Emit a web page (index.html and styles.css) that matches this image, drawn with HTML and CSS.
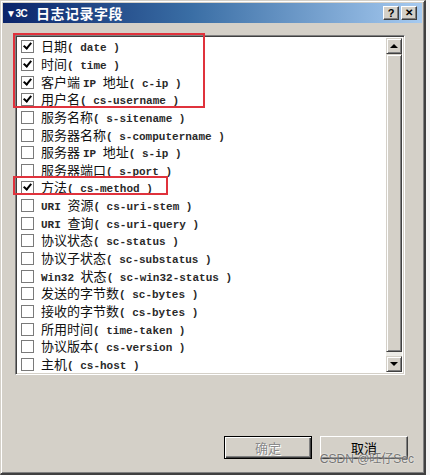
FILE: index.html
```html
<!DOCTYPE html>
<html>
<head>
<meta charset="utf-8">
<link rel="stylesheet" href="styles.css">
</head>
<body>
<div class="window">
  <div class="titlebar">
    <div class="title"><span class="app-icon">▼3C</span><span class="title-text">日志记录字段</span></div>
    <div class="tb-buttons">
      <span class="tb-btn">?</span>
      <span class="tb-btn close">✕</span>
    </div>
  </div>
  <div class="content">
    <div class="listbox">
      <div class="list">
        <div class="row"><span class="cb checked"></span><span class="label"><span class="zh">日期</span><span class="en">( date )</span></span></div>
        <div class="row"><span class="cb checked"></span><span class="label"><span class="zh">时间</span><span class="en">( time )</span></span></div>
        <div class="row"><span class="cb checked"></span><span class="label"><span class="zh">客户端 </span><span class="en">IP </span><span class="zh">地址</span><span class="en">( c-ip )</span></span></div>
        <div class="row"><span class="cb checked"></span><span class="label"><span class="zh">用户名</span><span class="en">( cs-username )</span></span></div>
        <div class="row"><span class="cb"></span><span class="label"><span class="zh">服务名称</span><span class="en">( s-sitename )</span></span></div>
        <div class="row"><span class="cb"></span><span class="label"><span class="zh">服务器名称</span><span class="en">( s-computername )</span></span></div>
        <div class="row"><span class="cb"></span><span class="label"><span class="zh">服务器 </span><span class="en">IP </span><span class="zh">地址</span><span class="en">( s-ip )</span></span></div>
        <div class="row"><span class="cb"></span><span class="label"><span class="zh">服务器端口</span><span class="en">( s-port )</span></span></div>
        <div class="row"><span class="cb checked"></span><span class="label"><span class="zh">方法</span><span class="en">( cs-method )</span></span></div>
        <div class="row"><span class="cb"></span><span class="label"><span class="en">URI </span><span class="zh">资源</span><span class="en">( cs-uri-stem )</span></span></div>
        <div class="row"><span class="cb"></span><span class="label"><span class="en">URI </span><span class="zh">查询</span><span class="en">( cs-uri-query )</span></span></div>
        <div class="row"><span class="cb"></span><span class="label"><span class="zh">协议状态</span><span class="en">( sc-status )</span></span></div>
        <div class="row"><span class="cb"></span><span class="label"><span class="zh">协议子状态</span><span class="en">( sc-substatus )</span></span></div>
        <div class="row"><span class="cb"></span><span class="label"><span class="en">Win32 </span><span class="zh">状态</span><span class="en">( sc-win32-status )</span></span></div>
        <div class="row"><span class="cb"></span><span class="label"><span class="zh">发送的字节数</span><span class="en">( sc-bytes )</span></span></div>
        <div class="row"><span class="cb"></span><span class="label"><span class="zh">接收的字节数</span><span class="en">( cs-bytes )</span></span></div>
        <div class="row"><span class="cb"></span><span class="label"><span class="zh">所用时间</span><span class="en">( time-taken )</span></span></div>
        <div class="row"><span class="cb"></span><span class="label"><span class="zh">协议版本</span><span class="en">( cs-version )</span></span></div>
        <div class="row"><span class="cb"></span><span class="label"><span class="zh">主机</span><span class="en">( cs-host )</span></span></div>
      </div>
      <div class="scrollbar">
        <div class="sb-btn"><span class="arrow up"></span></div>
        <div class="sb-track"><div class="sb-thumb"></div></div>
        <div class="sb-btn"><span class="arrow down"></span></div>
      </div>
      <div class="mark mark1"></div>
      <div class="mark mark2"></div>
    </div>
    <div class="buttons">
      <div class="btn default"><span class="btn-inner disabled">确定</span></div>
      <div class="btn"><span class="btn-inner">取消</span></div>
    </div>
  </div>
  <div class="watermark">CSDN @旺仔Sec</div>
</div>
</body>
</html>
```

FILE: styles.css
```css
html, body {
  margin: 0;
  padding: 0;
  background: #f4f4f4;
}
body {
  width: 430px;
  height: 475px;
  overflow: hidden;
  font-family: "Noto Sans CJK SC", "DejaVu Sans", sans-serif;
}
.window {
  position: relative;
  box-sizing: border-box;
  width: 426px;
  height: 475px;
  background: #d4d0c8;
  border-top: 1px solid #d4d0c8;
  border-left: 1px solid #d4d0c8;
  border-right: 2px solid #404040;
  border-bottom: 2px solid #404040;
  box-shadow: inset 1px 1px 0 #ffffff, inset -1px -1px 0 #808080;
  padding: 2px;
  display: flex;
  flex-direction: column;
}
.titlebar {
  height: 20px;
  background: linear-gradient(to right, #0a246a 0%, #3a6ea5 45%, #a6caf0 100%);
  display: flex;
  align-items: center;
  justify-content: space-between;
  padding: 0 2px 0 3px;
}
.title {
  display: flex;
  align-items: center;
  color: #ffffff;
}
.app-icon {
  font-family: "Liberation Sans", sans-serif;
  font-weight: bold;
  font-size: 10px;
  letter-spacing: -0.5px;
  width: 30px;
}
.title-text {
  font-size: 14px;
  font-weight: bold;
  letter-spacing: 0.5px;
}
.tb-buttons {
  display: flex;
  gap: 2px;
  margin-right: 3px;
}
.tb-btn {
  box-sizing: border-box;
  width: 16px;
  height: 14px;
  background: #d4d0c8;
  border-top: 1px solid #ffffff;
  border-left: 1px solid #ffffff;
  border-right: 1px solid #404040;
  border-bottom: 1px solid #404040;
  box-shadow: inset -1px -1px 0 #808080;
  font-family: "Liberation Sans", sans-serif;
  font-weight: bold;
  font-size: 11px;
  line-height: 12px;
  text-align: center;
  color: #000;
}
.tb-btn.close {
  font-size: 10px;
}
.content {
  flex: 1;
  display: flex;
  flex-direction: column;
  padding: 12px 17px 0 12px;
}
.listbox {
  position: relative;
  box-sizing: border-box;
  height: 340px;
  display: flex;
  background: #ffffff;
  border-top: 1px solid #808080;
  border-left: 1px solid #808080;
  border-right: 1px solid #ffffff;
  border-bottom: 1px solid #ffffff;
  box-shadow: inset 1px 1px 0 #404040, inset -1px -1px 0 #d4d0c8;
  padding: 2px;
}
.list {
  flex: 1;
}
.row {
  height: 17.65px;
  display: flex;
  align-items: center;
  white-space: nowrap;
  color: #111;
}
.label {
  line-height: 17px;
  white-space: pre;
}
.cb {
  box-sizing: border-box;
  width: 13px;
  height: 13px;
  margin: 0 7px 0 3px;
  border: 1px solid #7a7a7a;
  background: #ffffff;
  position: relative;
  flex: none;
}
.cb.checked::after {
  content: "";
  position: absolute;
  left: 3px;
  top: 0px;
  width: 3px;
  height: 6px;
  border-right: 2px solid #000;
  border-bottom: 2px solid #000;
  transform: rotate(40deg);
}
.zh {
  font-family: "Noto Sans CJK SC", sans-serif;
  font-size: 13px;
}
.en {
  font-family: "Liberation Mono", monospace;
  font-size: 11px;
  font-weight: bold;
  color: #2a2a2a;
}
.scrollbar {
  width: 16px;
  display: flex;
  flex-direction: column;
  background: #ecebe6;
}
.sb-btn {
  box-sizing: border-box;
  height: 16px;
  background: #d4d0c8;
  border-top: 1px solid #d4d0c8;
  border-left: 1px solid #d4d0c8;
  border-right: 1px solid #404040;
  border-bottom: 1px solid #404040;
  box-shadow: inset 1px 1px 0 #ffffff, inset -1px -1px 0 #808080;
  display: flex;
  align-items: center;
  justify-content: center;
}
.arrow {
  width: 0;
  height: 0;
  border-left: 4px solid transparent;
  border-right: 4px solid transparent;
}
.arrow.up {
  border-bottom: 4px solid #000;
}
.arrow.down {
  border-top: 4px solid #000;
}
.sb-track {
  flex: 1;
  display: flex;
  flex-direction: column;
  padding-bottom: 4px;
}
.sb-thumb {
  flex: 1;
  box-sizing: border-box;
  background: #d4d0c8;
  border-top: 1px solid #d4d0c8;
  border-left: 1px solid #d4d0c8;
  border-right: 1px solid #404040;
  border-bottom: 1px solid #404040;
  box-shadow: inset 1px 1px 0 #ffffff, inset -1px -1px 0 #808080;
}
.mark {
  position: absolute;
  border: 2px solid #e0323c;
  box-sizing: border-box;
}
.mark1 {
  left: -3px;
  top: -3px;
  width: 192px;
  height: 75px;
}
.mark2 {
  left: -3px;
  top: 140px;
  width: 155px;
  height: 19px;
}
.buttons {
  display: flex;
  justify-content: flex-end;
  gap: 8px;
  margin-top: 61px;
  margin-right: -3px;
}
.btn {
  box-sizing: border-box;
  width: 88px;
  height: 23px;
  background: #d4d0c8;
  border-top: 1px solid #ffffff;
  border-left: 1px solid #ffffff;
  border-right: 1px solid #404040;
  border-bottom: 1px solid #404040;
  box-shadow: inset -1px -1px 0 #808080;
  display: flex;
  align-items: center;
  justify-content: center;
}
.btn.default {
  border: 1px solid #000;
  box-shadow: inset 1px 1px 0 #ffffff, inset -1px -1px 0 #404040, inset -2px -2px 0 #808080;
}
.btn-inner {
  font-family: "Noto Sans CJK SC", sans-serif;
  font-size: 13px;
  color: #000;
}
.btn-inner.disabled {
  color: #8a8a8a;
  text-shadow: 1px 1px 0 #ffffff;
}
.watermark {
  position: absolute;
  right: 10px;
  bottom: 7px;
  font-family: "Liberation Sans", "Noto Sans CJK SC", sans-serif;
  font-size: 12px;
  color: rgba(80, 80, 80, 0.75);
  text-shadow: 0 0 2px #ffffff;
}
```
